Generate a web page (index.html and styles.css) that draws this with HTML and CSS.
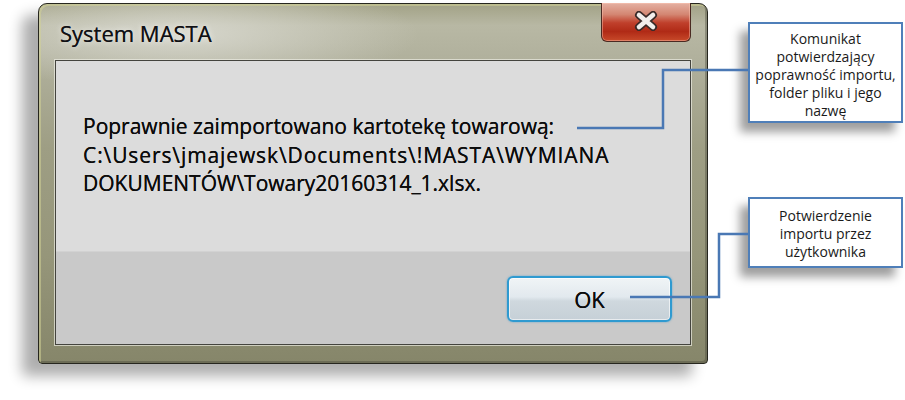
FILE: index.html
```html
<!DOCTYPE html>
<html lang="pl">
<head>
<meta charset="utf-8">
<title>System MASTA</title>
<link rel="stylesheet" href="styles.css">
</head>
<body>
<div class="page">
  <div class="window">
    <div class="titlebar">
      <span class="title">System MASTA</span>
      <div class="close">
        <svg width="26" height="20" viewBox="0 0 26 20">
          <path d="M6 4 L20 16 M20 4 L6 16" stroke="#3a2a28" stroke-width="8" stroke-linecap="round" fill="none"/>
          <path d="M6 4 L20 16 M20 4 L6 16" stroke="#f2eeec" stroke-width="4.6" stroke-linecap="round" fill="none"/>
        </svg>
      </div>
    </div>
    <div class="content">
      <div class="message">
        <p>Poprawnie zaimportowano kartotekę towarową:<br><span class="path">C:\Users\jmajewsk\Documents\!MASTA\WYMIANA</span><br>DOKUMENTÓW\Towary20160314_1.xlsx.</p>
      </div>
      <div class="actions">
        <button class="ok">OK</button>
      </div>
    </div>
  </div>
  <div class="notes">
    <div class="note note-1">Komunikat<br>potwierdzający<br>poprawność importu,<br>folder pliku i jego<br>nazwę</div>
    <div class="note note-2">Potwierdzenie<br>importu przez<br>użytkownika</div>
  </div>
  <svg class="connectors" width="905" height="400" viewBox="0 0 905 400">
    <path d="M577 128 H663 V70 H748" stroke="#4a78b4" stroke-width="2.5" fill="none"/>
    <path d="M630 297 H719 V234 H748" stroke="#4a78b4" stroke-width="2.5" fill="none"/>
  </svg>
</div>
</body>
</html>
```

FILE: styles.css
```css
* { box-sizing: border-box; }

html, body {
  margin: 0;
  padding: 0;
  background: #ffffff;
}

.page {
  position: relative;
  width: 905px;
  height: 400px;
  display: flex;
  align-items: flex-start;
  overflow: hidden;
  font-family: "Open Sans", "Noto Sans", sans-serif;
}

.window {
  margin-left: 38px;
  margin-top: 3px;
  width: 670px;
  height: 361px;
  border: 1px solid #26261e;
  border-radius: 9px 9px 4px 4px;
  background:
    radial-gradient(ellipse 240px 55px at 140px 30px, rgba(220,220,212,0.85), rgba(220,220,212,0) 100%),
    linear-gradient(to bottom, #a2a286 0%, #b8b8a4 6%, #b0b09c 16%, #9e9e84 40%, #96967a 70%, #86866a 100%);
  box-shadow: -16px 12px 14px rgba(0,0,0,0.32), inset 2px 2px 0 rgba(210,210,150,0.55), inset -2px -2px 0 rgba(60,60,50,0.35);
  padding: 0 16px 18px 16px;
  display: flex;
  flex-direction: column;
}

.titlebar {
  height: 56px;
  display: flex;
  justify-content: space-between;
  align-items: flex-start;
}

.title {
  padding: 15px 0 0 5px;
  font-size: 22px;
  line-height: 28px;
  color: #101014;
  text-shadow: 0 0 6px rgba(255,255,255,0.8), 0 0 0.5px #101014;
}

.close {
  width: 90px;
  height: 39px;
  margin-top: -1px;
  border: 1px solid #4a2a22;
  border-top: none;
  border-radius: 0 0 6px 6px;
  background: linear-gradient(to bottom, #e4b0a2 0%, #d48672 30%, #c0402c 52%, #b02a16 75%, #c84a2a 100%);
  box-shadow: inset 0 0 0 1px rgba(255,200,180,0.45);
  display: flex;
  align-items: center;
  justify-content: center;
}

.close svg { display: block; margin-top: -3px; }

.content {
  flex: 1;
  display: flex;
  flex-direction: column;
  border: 1px solid #44443e;
  background: #dcdcdc;
  box-shadow: 0 0 0 1px rgba(235,235,225,0.7);
}

.message {
  height: 190px;
  padding: 51px 0 0 27px;
}

.message p {
  margin: 0;
  font-size: 21px;
  line-height: 28.5px;
  color: #0c0c0c;
  text-shadow: 0 0 0.6px #0c0c0c;
}

.message .path {
  letter-spacing: 0.9px;
}

.actions {
  flex: 1;
  background: #c9c9c9;
  border-top: 1px solid #d2d2d2;
  display: flex;
  justify-content: flex-end;
  align-items: flex-start;
  padding: 24px 18px 0 0;
}

.ok {
  width: 165px;
  height: 46px;
  border: 2px solid #2f9ad0;
  border-radius: 6px;
  background: linear-gradient(to bottom, #f0f4f6 0%, #e2e9ee 45%, #cfd8de 55%, #c6d0d7 100%);
  box-shadow: 0 0 2px rgba(40,150,210,0.7), inset 0 0 0 1px rgba(255,255,255,0.6);
  font-family: "Open Sans", "Noto Sans", sans-serif;
  font-size: 22px;
  color: #0c0c0c;
  text-shadow: 0 0 0.6px #0c0c0c;
  padding: 0;
}

.notes {
  margin-left: 40px;
  display: flex;
  flex-direction: column;
}

.note {
  width: 155px;
  background: #ffffff;
  border: 2px solid #4f7fb9;
  box-shadow: -8px 9px 9px rgba(0,0,0,0.38);
  font-family: "Open Sans", "Noto Sans", sans-serif;
  font-size: 14px;
  line-height: 18px;
  color: #1a1a1a;
  text-align: center;
}

.note-1 {
  margin-top: 22px;
  height: 101px;
  padding-top: 6px;
}

.note-2 {
  margin-top: 74px;
  height: 71px;
  padding-top: 8px;
}

.connectors {
  position: absolute;
  left: 0;
  top: 0;
  pointer-events: none;
}
```
